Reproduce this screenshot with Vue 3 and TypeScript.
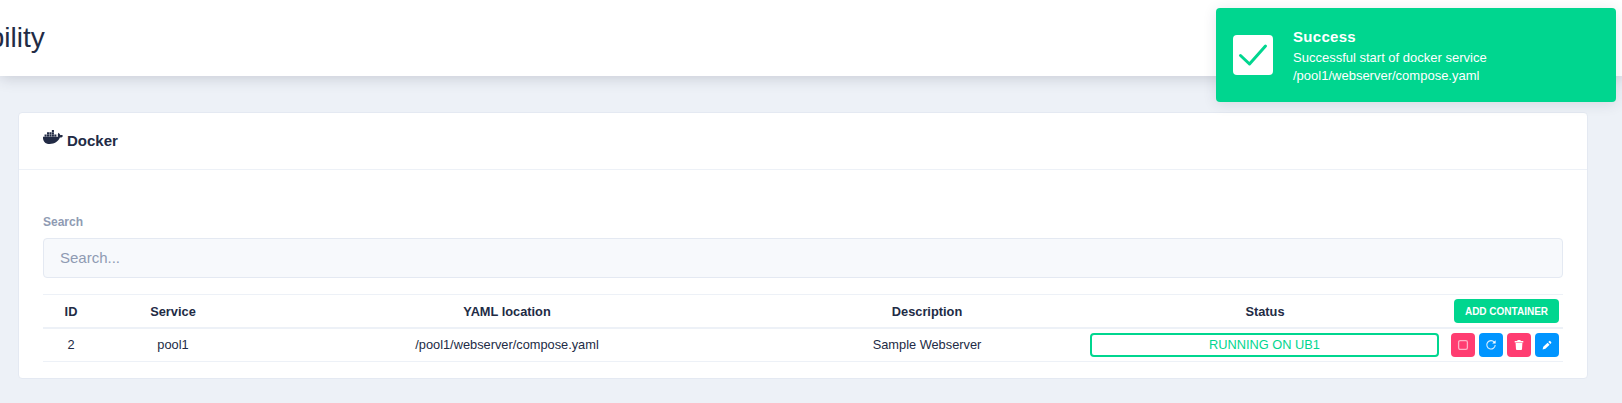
<template>
  <div class="page">
    <header class="topbar">
      <h1>Availability</h1>
    </header>

    <main class="content">
      <section class="card">
        <div class="card-header">
          <svg class="docker-icon" viewBox="0 0 640 512" aria-hidden="true">
            <path
              fill="currentColor"
              d="M349.9 236.3h-66.1v-59.4h66.1v59.4zm0-204.3h-66.1v60.7h66.1V32zm78.2 144.8H362v59.4h66.1v-59.4zm-156.3-72.1h-66.1v60.1h66.1v-60.1zm78.1 0h-66.1v60.1h66.1v-60.1zm276.8 100c-14.4-9.7-47.6-13.2-73.1-8.4-3.3-24-16.7-44.9-41.1-63.7l-14-9.3-9.3 14c-18.4 27.8-23.4 73.6-3.7 103.8-8.7 4.7-25.8 11.1-48.4 10.7H2.4c-8.7 50.8 5.8 116.8 44 162.1 37.1 43.9 92.7 66.2 165.4 66.2 157.4 0 273.9-72.5 328.4-204.2 21.4.4 67.6.1 91.3-45.2 1.5-2.5 6.6-13.2 8.5-17.1l-13.3-8.9zm-511.1-27.9h-66v59.4h66.1v-59.4zm78.1 0h-66.1v59.4h66.1v-59.4zm78.1 0h-66.1v59.4h66.1v-59.4zm-78.1-72.1h-66.1v60.1h66.1v-60.1z"
            />
          </svg>
          <span class="card-title">Docker</span>
        </div>

        <div class="card-body">
          <label class="search-label" for="search">Search</label>
          <input id="search" class="search-input" type="text" placeholder="Search..." />

          <table>
            <thead>
              <tr>
                <th class="col-id">ID</th>
                <th class="col-service">Service</th>
                <th class="col-yaml">YAML location</th>
                <th class="col-desc">Description</th>
                <th class="col-status">Status</th>
                <th class="col-actions">
                  <button class="add-btn" type="button">ADD CONTAINER</button>
                </th>
              </tr>
            </thead>
            <tbody>
              <tr v-for="item in rows" :key="item.id">
                <td>{{ item.id }}</td>
                <td>{{ item.service }}</td>
                <td>{{ item.yaml }}</td>
                <td>{{ item.description }}</td>
                <td class="status-cell">
                  <div class="status-pill">{{ item.status }}</div>
                </td>
                <td>
                  <div class="actions">
                    <button class="icon-btn danger" type="button" aria-label="Stop">
                      <svg viewBox="0 0 12 12" width="12" height="12">
                        <rect x="1.6" y="1.6" width="8.8" height="8.8" rx="1.6" fill="none" stroke="#fff" stroke-opacity=".6" stroke-width="1.3" />
                      </svg>
                    </button>
                    <button class="icon-btn info" type="button" aria-label="Restart">
                      <svg viewBox="0 0 12 12" width="12" height="12">
                        <path d="M9.3 3.2A4.2 4.2 0 1 0 10.2 6" fill="none" stroke="#fff" stroke-opacity=".85" stroke-width="1.1" />
                        <path d="M10.6 1.2v3.4H7.2z" fill="#fff" />
                      </svg>
                    </button>
                    <button class="icon-btn danger" type="button" aria-label="Delete">
                      <svg viewBox="0 0 12 12" width="12" height="12">
                        <path d="M4.6 1h2.8l.4 1.1h2.5v1.3H1.7V2.1h2.5zM2.6 4h6.8l-.4 6.2a.9.9 0 0 1-.9.8H3.9a.9.9 0 0 1-.9-.8z" fill="#fff" />
                      </svg>
                    </button>
                    <button class="icon-btn info" type="button" aria-label="Edit">
                      <svg viewBox="0 0 12 12" width="12" height="12">
                        <path d="M6.6 3.7l2 2-4.2 4.1-2.8.7.7-2.8zM7.3 3l.8-.8a.9.9 0 0 1 1.3 0l.7.7a.9.9 0 0 1 0 1.3l-.8.8z" fill="#fff" />
                      </svg>
                    </button>
                  </div>
                </td>
              </tr>
            </tbody>
          </table>
        </div>
      </section>
    </main>

    <div class="toast">
      <div class="toast-icon">
        <svg viewBox="0 0 40 40" width="40" height="40">
          <path d="M7.5 20.5l9 8.5 16-18" fill="none" stroke="#00d68f" stroke-width="3" stroke-linecap="round" stroke-linejoin="round" />
        </svg>
      </div>
      <div class="toast-text">
        <div class="toast-title">Success</div>
        <div class="toast-message">Successful start of docker service<br />/pool1/webserver/compose.yaml</div>
      </div>
    </div>
  </div>
</template>

<script setup lang="ts">
interface ServiceRow {
  id: number
  service: string
  yaml: string
  description: string
  status: string
}

const rows: ServiceRow[] = [
  {
    id: 2,
    service: 'pool1',
    yaml: '/pool1/webserver/compose.yaml',
    description: 'Sample Webserver',
    status: 'RUNNING ON UB1',
  },
]
</script>

<style>
html,
body {
  margin: 0;
  background: #edf1f7;
  overflow: hidden;
}
</style>

<style scoped>
.page {
  position: relative;
  width: 1622px;
  height: 403px;
  overflow: hidden;
  background: #edf1f7;
  color: #222b45;
  font-family: "Liberation Sans", Arial, sans-serif;
  font-size: 12.8px;
}

.topbar {
  display: flex;
  align-items: center;
  height: 76px;
  background: #fff;
  box-shadow: 0 2px 14px rgba(44, 51, 73, 0.2);
}

.topbar h1 {
  margin: 0 0 0 -87px;
  font-size: 28px;
  font-weight: 400;
  color: #222b45;
}

.content {
  padding: 36px 34px 0 18px;
}

.card {
  border: 1px solid #e4e9f2;
  border-radius: 4px;
  background: #fff;
}

.card-header {
  display: flex;
  align-items: flex-start;
  gap: 4px;
  box-sizing: border-box;
  height: 57px;
  padding: 16px 24px 0;
  border-bottom: 1px solid #edf1f7;
}

.docker-icon {
  width: 20px;
  height: 16px;
}

.card-title {
  margin-top: 3px;
  font-size: 15px;
  font-weight: 700;
}

.card-body {
  padding: 44px 24px 16px;
}

.search-label {
  display: block;
  margin-bottom: 8px;
  color: #8f9bb3;
  font-size: 12px;
  font-weight: 700;
  line-height: 16px;
}

.search-input {
  display: block;
  box-sizing: border-box;
  width: 100%;
  height: 40px;
  padding: 0 16px 2px;
  border: 1px solid #e4e9f2;
  border-radius: 4px;
  background: #f7f9fc;
  font-family: inherit;
  font-size: 15px;
  color: #222b45;
  outline: none;
}

.search-input::placeholder {
  color: #8f9bb3;
  opacity: 1;
}

table {
  width: 100%;
  margin-top: 16px;
  border-collapse: separate;
  border-spacing: 0;
  table-layout: fixed;
}

th {
  box-sizing: border-box;
  height: 35px;
  padding: 0;
  border-top: 1px solid #edf1f7;
  border-bottom: 2px solid #edf1f7;
  font-weight: 700;
  text-align: center;
}

td {
  box-sizing: border-box;
  height: 33px;
  padding: 0 0 1px;
  border-bottom: 1px solid #edf1f7;
  text-align: center;
}

.col-id {
  width: 56px;
}

.col-service {
  width: 148px;
}

.col-yaml {
  width: 520px;
}

.col-desc {
  width: 320px;
}

.col-status {
  width: 356px;
}

.col-actions {
  width: 120px;
  padding-right: 4px;
  text-align: right;
}

.status-cell {
  padding: 0 4px 1px 3px;
}

.status-pill {
  box-sizing: border-box;
  height: 24px;
  border: 2px solid #00d68f;
  border-radius: 4px;
  color: #00d68f;
  line-height: 20px;
}

.actions {
  display: flex;
  justify-content: flex-end;
  gap: 4px;
  padding-right: 4px;
}

.add-btn {
  width: 105px;
  height: 24px;
  padding: 0;
  border: 0;
  border-radius: 4px;
  background: #00d68f;
  color: #fff;
  font-family: inherit;
  font-size: 10px;
  font-weight: 700;
  vertical-align: middle;
}

.icon-btn {
  display: flex;
  align-items: center;
  justify-content: center;
  width: 24px;
  height: 24px;
  padding: 0;
  border: 0;
  border-radius: 4px;
}

.icon-btn.danger {
  background: #ff3d71;
}

.icon-btn.info {
  background: #0095ff;
}

.toast {
  position: absolute;
  top: 8px;
  left: 1216px;
  display: flex;
  align-items: center;
  box-sizing: border-box;
  width: 400px;
  height: 94px;
  padding-left: 17px;
  border-radius: 4px;
  background: #00d68f;
  box-shadow: 0 2px 14px rgba(44, 51, 73, 0.12);
  color: #fff;
}

.toast-icon {
  flex: none;
  width: 40px;
  height: 40px;
  border-radius: 4px;
  background: #fff;
}

.toast-text {
  margin-left: 20px;
  padding-top: 1px;
}

.toast-title {
  font-size: 15px;
  font-weight: 700;
  line-height: 20px;
  letter-spacing: 0.3px;
}

.toast-message {
  margin-top: 2px;
  font-size: 13px;
  line-height: 18px;
}
</style>
